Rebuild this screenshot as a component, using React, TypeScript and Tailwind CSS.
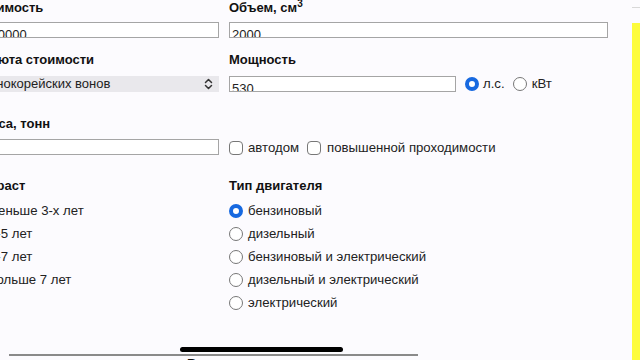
import React from 'react'

const font = { fontFamily: '"Liberation Sans", Arial, sans-serif' }

const Label: React.FC<{ children: React.ReactNode }> = ({ children }) => (
  <div className="h-[16px] leading-[16px] text-[13px] font-bold text-[#111] whitespace-nowrap">{children}</div>
)

// text inputs in the shot are cut off at the bottom edge
const Field: React.FC<{ value?: string; className?: string }> = ({ value = '', className = '' }) => (
  <div className={`h-[16px] border border-[#a5a5a5] bg-white overflow-hidden ${className}`}>
    <div className="pt-[5px] pl-[2px] leading-none text-[13px] text-[#222] whitespace-nowrap">{value}</div>
  </div>
)

const Radio: React.FC<{ checked?: boolean }> = ({ checked }) =>
  checked ? (
    <span className="block w-[14px] h-[14px] rounded-full border-[4px] border-[#1769e0] bg-white shrink-0" />
  ) : (
    <span className="block w-[14px] h-[14px] rounded-full border border-[#777] bg-white shrink-0" />
  )

const Check = () => <span className="block w-[14px] h-[14px] rounded-[4px] border border-[#777] bg-white shrink-0" />

const Option: React.FC<{ label: string; checked?: boolean }> = ({ label, checked }) => (
  <div className="h-[23px] flex items-center gap-[5px] text-[13.2px] text-[#222] whitespace-nowrap">
    <Radio checked={checked} />
    <span>{label}</span>
  </div>
)

export default function App() {
  return (
    <div className="w-[640px] h-[360px] overflow-hidden relative bg-[#fcfbfe] flex" style={font}>
      <div className="w-[632px] shrink-0 flex flex-col">
        <div className="ml-[-27px] grid grid-cols-[246px_379px] gap-x-[10px] shrink-0">
          {/* row 1 */}
          <div>
            <Label>Стоимость</Label>
            <Field value="3000000" className="mt-[6px]" />
          </div>
          <div>
            <Label>
              Объем, см<sup className="text-[10px] leading-none">3</sup>
            </Label>
            <Field value="2000" className="mt-[6px]" />
          </div>

          {/* row 2 */}
          <div className="mt-[14px]">
            <Label>Валюта стоимости</Label>
            <div className="mt-[8px] h-[16px] bg-[#e9e8ec] flex items-center justify-between pl-[5px] pr-[6px] text-[13px] text-[#222]">
              <span className="whitespace-nowrap">южнокорейских вонов</span>
              <svg width="9" height="12" viewBox="0 0 9 12" fill="none" stroke="#333" strokeWidth="1.5" strokeLinecap="round" strokeLinejoin="round">
                <path d="M1.5 4.5 L4.5 1.5 L7.5 4.5" />
                <path d="M1.5 7.5 L4.5 10.5 L7.5 7.5" />
              </svg>
            </div>
          </div>
          <div className="mt-[14px]">
            <Label>Мощность</Label>
            <div className="mt-[8px] flex items-center h-[16px] text-[13.2px] text-[#222] whitespace-nowrap">
              <Field value="530" className="w-[227px] shrink-0" />
              <span className="ml-[9px]"><Radio checked /></span>
              <span className="ml-[4px]">л.с.</span>
              <span className="ml-[8px]"><Radio /></span>
              <span className="ml-[5px]">кВт</span>
            </div>
          </div>

          {/* row 3 */}
          <div className="mt-[24px]">
            <Label>Масса, тонн</Label>
            <Field className="mt-[7px]" />
          </div>
          <div className="mt-[24px]">
            <div className="h-[16px]" />
            <div className="mt-[9px] h-[14px] flex items-center text-[13.2px] text-[#222] whitespace-nowrap">
              <Check />
              <span className="ml-[5px]">автодом</span>
              <span className="ml-[8px]"><Check /></span>
              <span className="ml-[6px]">повышенной проходимости</span>
            </div>
          </div>

          {/* row 4 */}
          <div className="mt-[23px]">
            <Label>Возраст</Label>
            <div className="mt-[5px] ml-[-3px]">
              <Option label="меньше 3-х лет" />
              <Option label="3-5 лет" />
              <Option label="5-7 лет" />
              <Option label="больше 7 лет" />
            </div>
          </div>
          <div className="mt-[23px]">
            <Label>Тип двигателя</Label>
            <div className="mt-[5px]">
              <Option label="бензиновый" checked />
              <Option label="дизельный" />
              <Option label="бензиновый и электрический" />
              <Option label="дизельный и электрический" />
              <Option label="электрический" />
            </div>
          </div>
        </div>

        <div className="mt-[40px] ml-[9px] w-[409px] h-[2px] bg-[#8a8a8a] shrink-0" />
        <div className="ml-[187px] text-[13px] font-bold leading-[16px] text-[#111] shrink-0">Ввозит</div>
      </div>

      {/* right edge strip */}
      <div className="w-[8px] shrink-0 flex flex-col">
        <div className="mt-[7px] h-[1px] bg-[#d8d8d8] shrink-0" />
        <div className="mt-[15px] flex-1 bg-[#fdfc3c]" />
      </div>

      <div className="absolute left-[180px] top-[347px] w-[163px] h-[5px] rounded-full bg-black" />
    </div>
  )
}
